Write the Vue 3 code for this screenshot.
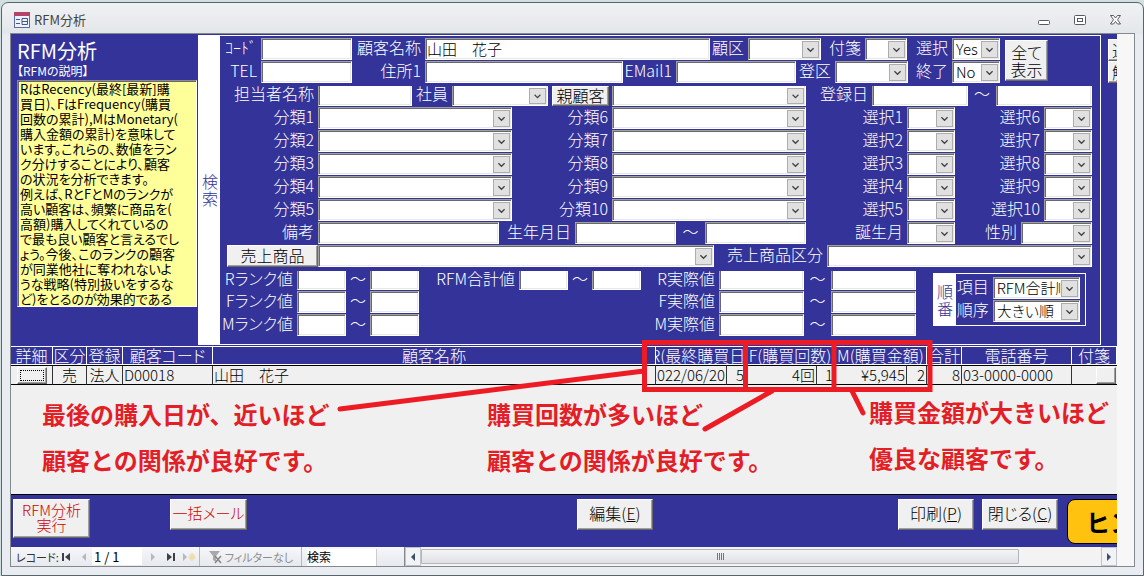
<script setup>
import { ref } from 'vue'

const columns = (cells) => ({
  gridTemplateColumns: cells.map((c) => `minmax(0, ${c.w}fr)`).join(' '),
})

let serial = 0
let lastLabel = { id: '', text: '' }
const label = (w, text) => {
  lastLabel = { id: `f${++serial}`, text }
  return { kind: 'label', w, text, id: lastLabel.id }
}
const field = (kind, w, value) => {
  const cell = { kind, w, value, id: lastLabel.id || `f${++serial}`, name: lastLabel.text }
  lastLabel = { id: '', text: lastLabel.text }
  return cell
}
const text = (w, value = '') => field('text', w, value)
const select = (w, value = '') => field('select', w, value)
const tilde = (w) => ({ kind: 'tilde', w })
const gap = (w) => ({ kind: 'gap', w })
const button = (w, caption) => {
  lastLabel = { id: '', text: caption }
  return { kind: 'button', w, text: caption }
}

const topRows = [
  { cells: [label(41, 'ｺｰﾄﾞ'), text(91), label(73, '顧客名称'), text(285, '山田　花子'), label(38, '顧区'), select(73), label(44, '付箋'), select(42), label(45, '選択'), select(48, 'Yes')] },
  { cells: [label(41, 'TEL'), text(91), label(73, '住所1'), text(198), label(53, 'EMail1'), text(120), label(39, '登区'), select(73), label(44, '終了'), select(48, 'No')] },
]

const middleRows = [
  { cut: true, cells: [label(98, '担当者名称'), text(94), label(40, '社員'), select(96), gap(4), button(57, '親顧客'), gap(3), select(194), label(66, '登録日'), text(96), tilde(28), text(96), gap(8)] },
  ...[1, 2, 3, 4, 5].map((n) => ({
    cells: [label(98, `分類${n}`), select(194), label(100, `分類${n + 5}`), select(194), label(101, `選択${n}`), select(48), label(89, `選択${n + 5}`), select(48), gap(8)],
  })),
  { cells: [label(98, '備考'), text(181), label(76, '生年月日'), text(101), tilde(29), text(101), label(101, '誕生月'), select(48), label(66, '性別'), select(71), gap(8)] },
  { cells: [gap(7), button(91, '売上商品'), select(396), label(113, '売上商品区分'), select(265), gap(8)] },
]

const rankRows = [
  { cut: true, cells: [label(77, 'Rランク値'), text(49), tilde(24), text(49), label(100, 'RFM合計値'), text(49), tilde(24), text(49), label(78, 'R実際値'), text(85), tilde(27), text(85)] },
  { cells: [label(77, 'Fランク値'), text(49), tilde(24), text(49), label(300, 'F実際値'), text(85), tilde(27), text(85)] },
  { cells: [label(77, 'Mランク値'), text(49), tilde(24), text(49), label(300, 'M実際値'), text(85), tilde(27), text(85)] },
]

const sortRows = [
  { cells: [label(37, '項目'), select(88, 'RFM合計順位'), gap(5)] },
  { cells: [label(37, '順序'), select(88, '大きい順'), gap(5)] },
]

const sections = [
  { name: 'top', rows: topRows },
  { name: 'middle', rows: middleRows },
  { name: 'rank', rows: rankRows },
]

const description = [
  'RはRecency(最終[最新]購',
  '買日)、FはFrequency(購買',
  '回数の累計),MはMonetary(',
  '購入金額の累計)を意味して',
  'います。これらの、数値をラン',
  'ク分けすることにより、顧客',
  'の状況を分析できます。',
  '例えば、RとFとMのランクが',
  '高い顧客は、頻繁に商品を(',
  '高額)購入してくれているの',
  'で最も良い顧客と言えるでし',
  'ょう。今後、このランクの顧客',
  'が同業他社に奪われないよ',
  'うな戦略(特別扱いをするな',
  'ど)をとるのが効果的である',
]

const colWidths = [42, 34, 36, 90, 443, 71, 19, 71, 18, 72, 20, 35, 110, 45]
const colTotal = colWidths.reduce((a, b) => a + b, 0)
const headers = [
  { t: '詳細' }, { t: '区分' }, { t: '登録' }, { t: '顧客コード' }, { t: '顧客名称' },
  { t: 'R(最終購買日)', span: 2 }, { t: 'F(購買回数)', span: 2 }, { t: 'M(購買金額)', span: 2 },
  { t: '合計' }, { t: '電話番号' }, { t: '付箋' },
]
const record = [
  { t: '売', a: 'center' }, { t: '法人', a: 'center' }, { t: 'D00018', a: 'left' }, { t: '山田　花子', a: 'left' },
  { t: '2022/06/20', a: 'right' }, { t: '5', a: 'right' }, { t: '4回', a: 'right' }, { t: '1', a: 'right' },
  { t: '¥5,945', a: 'right' }, { t: '2', a: 'right' }, { t: '8', a: 'right' }, { t: '03-0000-0000', a: 'left' },
]

const position = ref('1 / 1')
const query = ref('検索')
</script>

<template>
  <div class="window">
    <header class="titlebar">
      <svg class="form-icon" width="16" height="16" viewBox="0 0 16 16">
        <rect x="0.5" y="0.5" width="15" height="15" fill="#eef2fb" stroke="#5a6da5" />
        <rect x="0" y="0" width="16" height="4" fill="#b5446b" />
        <path d="M2 7.5h4M2 11.5h4" stroke="#44598f" />
        <path d="M8 6.5h5.500v6H8zM8 9.500h5" stroke="#44598f" fill="none" />
      </svg>
      <h1>RFM分析</h1>
      <div class="controls">
        <button type="button" aria-label="最小化"><svg width="14" height="14" viewBox="0 0 14 14"><rect x="1.5" y="7.5" width="11" height="4" rx="1" fill="#fff" stroke="#555a66" /></svg></button>
        <button type="button" aria-label="最大化"><svg width="14" height="14" viewBox="0 0 14 14"><rect x="1.5" y="2.5" width="11" height="9" rx="1" fill="#fff" stroke="#555a66" /><rect x="4.5" y="5.5" width="5" height="3" fill="#fff" stroke="#555a66" /></svg></button>
        <button type="button" aria-label="閉じる"><svg width="14" height="14" viewBox="0 0 14 14"><path d="M1.5 2.5h3l2 2.5 2-2.5h3l-3 4.200 3 4.300h-3l-2-2.500-2 2.500h-3l3-4.300z" fill="#fff" stroke="#555a66" /></svg></button>
      </div>
    </header>

    <div class="frame">
      <main class="form">
        <div class="upper">
          <aside class="about">
            <h2>RFM分析</h2>
            <p class="caption">【RFMの説明】</p>
            <div class="memo"><p v-for="line in description" :key="line">{{ line }}</p></div>
          </aside>
          <div class="tab">検索</div>

          <form class="search" @submit.prevent>
            <div v-for="s in sections" :key="s.name" :class="['section', s.name]">
              <div class="rows">
                <div v-for="(r, i) in s.rows" :key="i" :class="['row', { cut: r.cut }]" :style="columns(r.cells)">
                  <template v-for="(c, j) in r.cells" :key="j">
                    <label v-if="c.kind === 'label'" :for="c.id">{{ c.text }}</label>
                    <input v-else-if="c.kind === 'text'" :id="c.id" class="box" type="text" :aria-label="c.name" :value="c.value" />
                    <span v-else-if="c.kind === 'select'" class="combo box">
                      <select :id="c.id" :aria-label="c.name"><option>{{ c.value }}</option></select>
                      <svg class="drop" viewBox="0 0 17 17"><path d="M5 7l3.500 3.500L12 7" /></svg>
                    </span>
                    <button v-else-if="c.kind === 'button'" type="button" class="raised">{{ c.text }}</button>
                    <span v-else-if="c.kind === 'tilde'" class="tilde">～</span>
                    <span v-else></span>
                  </template>
                </div>
              </div>
              <button v-if="s.name === 'top'" type="button" class="raised all">全て<br />表示</button>
              <div v-if="s.name === 'rank'" class="sort">
                <div class="sort-tab">順番</div>
                <div class="rows">
                  <div v-for="(r, i) in sortRows" :key="i" class="row" :style="columns(r.cells)">
                    <label :for="r.cells[0].id">{{ r.cells[0].text }}</label>
                    <span class="combo box">
                      <select :id="r.cells[1].id"><option>{{ r.cells[1].value }}</option></select>
                      <svg class="drop" viewBox="0 0 17 17"><path d="M5 7l3.500 3.500L12 7" /></svg>
                    </span>
                  </div>
                </div>
              </div>
            </div>
          </form>

          <div class="edge">
            <button type="button" class="raised">追加</button>
            <button type="button" class="raised">解除</button>
          </div>
        </div>

        <section class="sheet">
          <table>
            <colgroup><col v-for="(w, i) in colWidths" :key="i" :style="{ width: (w / colTotal) * 100 + '%' }" /></colgroup>
            <thead>
              <tr><th v-for="h in headers" :key="h.t" :colspan="h.span || 1"><div>{{ h.t }}</div></th></tr>
            </thead>
            <tbody>
              <tr>
                <td><button type="button" class="raised detail" aria-label="詳細"><i></i></button></td>
                <td v-for="(c, i) in record" :key="i"><div :class="c.a">{{ c.t }}</div></td>
                <td><button type="button" class="raised flag" aria-label="付箋"></button></td>
              </tr>
            </tbody>
          </table>
          <div class="notes">
            <p>最後の購入日が、近いほど<br />顧客との関係が良好です。</p>
            <p>購買回数が多いほど<br />顧客との関係が良好です。</p>
            <p class="high">購買金額が大きいほど<br />優良な顧客です。</p>
          </div>
          <svg class="marks" viewBox="0 0 1106 148" preserveAspectRatio="none">
            <path d="M633.500 -3.500H919V43.500H633.500zM734.500 -4V44M823 -4V44" />
            <path class="round" d="M633 25L329 63M761 45L694 83M841 45L852 67" />
          </svg>
        </section>

        <footer class="actions">
          <button type="button" class="raised red run">RFM分析<br />実行</button>
          <button type="button" class="raised red mail">一括メール</button>
          <button type="button" class="raised edit">編集(<u>E</u>)</button>
          <button type="button" class="raised print">印刷(<u>P</u>)</button>
          <button type="button" class="raised close">閉じる(<u>C</u>)</button>
          <button type="button" class="hint">ヒント</button>
        </footer>

        <nav class="navigator">
          <div class="records">
            <label for="position">レコード:</label>
            <button type="button" aria-label="先頭"><svg width="10" height="10" viewBox="0 0 10 10"><path d="M1 1h2v8H1zM9 1v8L4 5z" fill="#3b3f48" /></svg></button>
            <button type="button" aria-label="前"><svg width="10" height="10" viewBox="0 0 10 10"><path d="M7 1v8L3 5z" fill="#b5b8bf" /></svg></button>
            <input id="position" v-model="position" type="text" />
            <button type="button" aria-label="次"><svg width="10" height="10" viewBox="0 0 10 10"><path d="M3 1v8l4-4z" fill="#b5b8bf" /></svg></button>
            <button type="button" aria-label="最後"><svg width="10" height="10" viewBox="0 0 10 10"><path d="M1 1v8l5-4zM7 1h2v8H7z" fill="#3b3f48" /></svg></button>
            <button type="button" aria-label="新規"><svg width="14" height="10" viewBox="0 0 14 10"><path d="M1 1v8l4-4z" fill="#b5b8bf" /><path d="M10 1v8M6.500 5h7M7.500 2.500l5 5M12.500 2.500l-5 5" stroke="#f0dca6" stroke-width="1.500" /></svg></button>
          </div>
          <button type="button" class="filter">
            <svg width="15" height="14" viewBox="0 0 15 14"><path d="M1 1h11L8 6v6l-3-2V6z" fill="#a9a9a9" /><path d="M7 6l6 7M13 6l-6 7" stroke="#858585" stroke-width="1.500" /></svg>
            フィルターなし
          </button>
          <div class="find"><input v-model="query" type="text" aria-label="検索" /></div>
          <div class="scroll">
            <button type="button" aria-label="左へ"><svg width="8" height="10" viewBox="0 0 8 10"><path d="M6 1v8L2 5z" fill="#3f4c6b" /></svg></button>
            <div class="track"><div class="thumb"><i></i><i></i><i></i><i></i></div></div>
            <button type="button" aria-label="右へ"><svg width="8" height="10" viewBox="0 0 8 10"><path d="M2 1v8l4-4z" fill="#3f4c6b" /></svg></button>
          </div>
        </nav>
      </main>
    </div>
  </div>
</template>

<style>
body { background: #d3e0e1; }
#app { display: flex; min-height: 100vh; }
</style>

<style scoped>
.window, .window * { box-sizing: border-box; }
.window {
  flex: 1;
  min-width: 0;
  display: flex;
  flex-direction: column;
  margin: 2px 0 0 1px;
  padding: 0 8px 8px;
  border: 1px solid #56666b;
  border-radius: 7px 7px 0 0;
  background: linear-gradient(#f0f1f3, #e4e7ea 30px, #e9ecf1 32px);
  font-family: "Noto Sans CJK JP", sans-serif;
  font-feature-settings: "palt";
  font-size: 16px;
  font-weight: 300;
  line-height: 18px;
  color: #000;
}
h1, h2, p { margin: 0; font-weight: 300; }
button, input, select { font: inherit; font-feature-settings: inherit; color: inherit; margin: 0; padding: 0; border: 0; border-radius: 0; min-width: 0; }
.titlebar { display: flex; align-items: center; height: 30px; padding: 4px 12px 0 4px; }
.titlebar h1 { flex: 1; padding-left: 4px; font-size: 13px; font-weight: 400; color: #444; }
.controls { display: flex; gap: 22px; }
.controls button { display: flex; width: 14px; background: none; }

.frame { flex: 1; display: flex; padding-right: 17px; border: 1px solid #83878e; background: #f7f7f8; }
.form { flex: 1; min-width: 0; display: flex; flex-direction: column; background: #333399; overflow: hidden; }

.upper { display: flex; padding: 1px 0; }
.about { width: 187px; flex: none; padding: 5px 1px 0 6px; color: #fff; }
.about h2 { font-size: 20px; line-height: 22px; font-weight: 400; }
.caption { font-size: 12px; line-height: 18px; font-weight: 400; }
.memo { height: 227px; padding: 0 2px; background: #ffff99; color: #000; border: 1px solid; border-color: #8a8a8a #fff #fff #8a8a8a; box-shadow: inset 1px 1px #696969; font-size: 13px; line-height: 15px; white-space: nowrap; overflow: hidden; }
.memo p { font-weight: 400; }
.tab { width: 22px; flex: none; display: flex; align-items: center; padding: 0 2px 0 4px; background: #fff; color: #333399; line-height: 17px; }

.search { flex: 1; min-width: 0; padding: 2px 0 8px; border: solid #fff; border-width: 1px 1px 1px 0; }
.rows { display: flex; flex-direction: column; gap: 1px; min-width: 0; }
.row { display: grid; grid-template-rows: minmax(0, 1fr); height: 22px; color: #fff; }
.row.cut { height: 20px; }
.row.cut .box { border-top: 0; box-shadow: inset 1px 0 #696969, inset -1px -1px #e8e8e8; }
.row label { display: flex; justify-content: flex-end; padding-right: 4px; white-space: nowrap; }
.tilde { display: flex; justify-content: center; }
.row.cut label, .row.cut .tilde { line-height: 14px; }
.box { width: 100%; height: 100%; background: #fff; color: #000; border: 1px solid; border-color: #a0a0a0 #fff #fff #a0a0a0; box-shadow: inset 1px 1px #696969, inset -1px -1px #e8e8e8; }
.box, .combo select { font-size: 15px; padding-left: 1px; }
input.box { padding-bottom: 2px; }
.combo { display: grid; grid-template-columns: minmax(0, 1fr) 17px; grid-template-rows: minmax(0, 1fr); padding: 2px 1px 1px 2px; }
.combo select { appearance: none; outline: 0; background: transparent; width: 100%; height: 100%; grid-area: 1 / 1 / 2 / 2; overflow: hidden; line-height: 16px; padding-bottom: 2px; }
.drop { grid-area: 1 / 2; width: 17px; height: 100%; background: #e1e1e1; border: 1px solid #adadad; pointer-events: none; }
.drop path { fill: none; stroke: #444; stroke-width: 1.500; }
.raised { background: #f0f0f0; color: #000; border: 1px solid; border-color: #fff #696969 #696969 #fff; box-shadow: inset -1px -1px #a0a0a0; text-align: center; white-space: nowrap; overflow: hidden; }
.row .raised { line-height: 16px; padding-bottom: 2px; }

.section.top { display: grid; grid-template-columns: minmax(0, 780fr) minmax(0, 5fr) minmax(0, 43fr) minmax(0, 52fr); }
.all { grid-column: 3; margin: 2px 0; line-height: 17px; }
.section.middle { margin-top: 3px; }
.section.rank { margin-top: 4px; display: grid; grid-template-columns: minmax(0, 696fr) minmax(0, 17fr) minmax(0, 153fr) minmax(0, 14fr); }
.rank > .rows > .cut { height: 19px; }
.sort { grid-column: 3; align-self: start; display: flex; margin-top: 2px; border: 1px solid #fff; }
.sort-tab { width: 22px; display: flex; align-items: center; padding: 0 3px; background: #fff; color: #333399; line-height: 17px; }
.sort .rows { flex: 1; padding: 3px 0; }

.edge { width: 16px; flex: none; display: flex; flex-direction: column; padding: 4px 0 0 7px; overflow: hidden; }
.edge .raised { width: 60px; height: 22px; text-align: left; padding-left: 3px; }

.sheet { flex: 1; display: flex; flex-direction: column; position: relative; background: #f0f0f0; border-bottom: 1px solid #000; }
table { width: 100%; table-layout: fixed; border-collapse: separate; border-spacing: 0; }
th, td { padding: 0; font-weight: 300; border-right: 1px solid #333; }
th { background: #333399; color: #fff; border: solid #fff; border-width: 1px 1px 1px 0; }
th div { height: 17px; line-height: 17px; display: flex; justify-content: center; white-space: nowrap; overflow: hidden; }
td { height: 20px; border-top: 1px solid #000; border-bottom: 1px solid #000; font-size: 15px; vertical-align: top; }
td:last-child { border-right: 0; }
td div { display: flex; white-space: nowrap; overflow: hidden; padding: 0 1px; }
td .center { justify-content: center; }
td .right { justify-content: flex-end; }
.detail { display: flex; width: 30px; height: 17px; margin: 1px auto 0 6px; padding: 2px; }
.detail i { flex: 1; border: 1px dotted #000; }
.flag { display: block; width: 20px; height: 17px; margin: 1px 1px 0 auto; }
.notes { flex: 1; display: grid; grid-template-columns: minmax(0, 445fr) minmax(0, 382fr) minmax(0, 248fr); padding: 6px 0 10px 31px; color: #e31e26; font-size: 24px; line-height: 46px; white-space: nowrap; font-feature-settings: normal; }
.notes p { font-weight: 700; }
.notes .high { margin-top: -2px; }
.marks { position: absolute; left: 0; top: 0; width: 100%; height: 148px; overflow: visible; pointer-events: none; }
.marks path { fill: none; stroke: #ed1c24; stroke-width: 5; vector-effect: non-scaling-stroke; }
.marks .round { stroke-linecap: round; }

.actions {
  display: grid;
  grid-template-columns:
    minmax(0, 2fr) minmax(0, 77fr) minmax(0, 80fr) minmax(0, 77fr) minmax(0, 330fr) minmax(0, 76fr)
    minmax(0, 245fr) minmax(0, 76fr) minmax(0, 8fr) minmax(0, 76fr) minmax(0, 9fr) minmax(0, 50fr);
  align-items: start;
  padding: 4px 0 3px;
}
.actions .raised { height: 31px; padding-bottom: 4px; }
.actions .run { grid-column: 2; height: 39px; font-size: 15px; line-height: 15px; }
.actions .mail { grid-column: 4; }
.actions .edit { grid-column: 6; }
.actions .print { grid-column: 8; }
.actions .close { grid-column: 10; }
.actions .red { color: #d00000; font-size: 15px; }
.hint { grid-column: 12; width: 120px; height: 45px; padding-left: 18px; text-align: left; background: #ffc20e; border: 1px solid #000; border-radius: 8px; font-size: 24px; font-weight: 700; font-feature-settings: normal; }

.navigator { display: flex; align-items: stretch; height: 19px; background: linear-gradient(#f6f7f9, #e6e9ee); font-size: 12px; font-weight: 400; line-height: 18px; color: #333; }
.records { display: flex; align-items: center; width: 189px; flex: none; padding-left: 5px; border-right: 1px solid #b4b8c0; }
.records label { width: 41px; flex: none; white-space: nowrap; font-size: 11px; }
.records button { width: 18px; flex: none; display: flex; justify-content: center; background: none; }
.records input { width: 50px; height: 17px; margin: 0 2px 0 -1px; padding-left: 2px; background: #fff; color: #000; font-size: 13px; }
.filter { display: flex; align-items: center; justify-content: center; gap: 2px; width: 102px; flex: none; background: none; border-right: 1px solid #b4b8c0; color: #8d8d8d; white-space: nowrap; font-size: 11px; }
.find { width: 102px; flex: none; padding: 1px 0 0 5px; }
.find input { width: 70px; height: 17px; background: #fff; color: #000; border-right: 1px solid #ccc; }
.scroll { flex: 1; display: flex; background: #f3f3f4; border-left: 1px solid #83878e; }
.scroll button { width: 16px; display: flex; align-items: center; justify-content: center; background: #f2f3f5; border: 1px solid #c0c3c9; }
.track { flex: 1; display: flex; padding: 2px 0; }
.thumb { width: 88%; display: flex; align-items: center; justify-content: center; gap: 1px; background: linear-gradient(#f4f4f5, #dfe1e5); border: 1px solid #b2b5bb; border-radius: 1px; }
.thumb i { width: 1px; height: 7px; background: #777; }
</style>
